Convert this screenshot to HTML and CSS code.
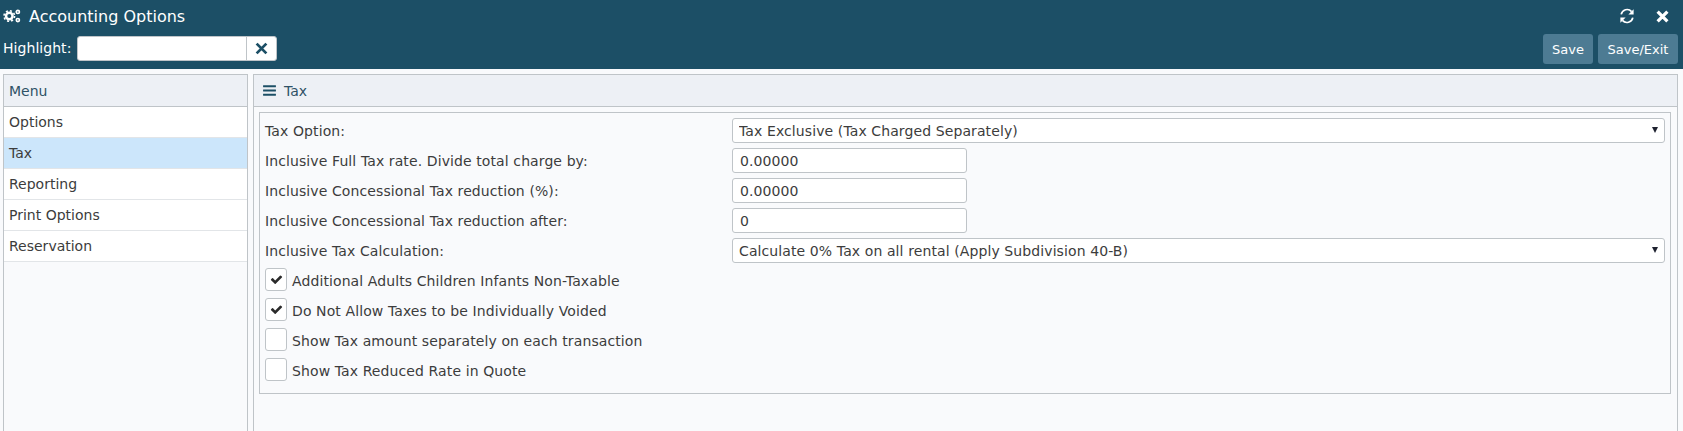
FILE: index.html
```html
<!DOCTYPE html>
<html lang="en">
<head>
    <meta charset="UTF-8">
    <meta name="viewport" content="width=device-width, initial-scale=1.0">
    <title>Accounting Options</title>
    <link rel="stylesheet" href="styles.css">
</head>
<body>
    <header class="topbar">
        <div class="title-row">
            <svg class="cogs" viewBox="0 0 16 12">
                <circle class="gear-teeth" cx="5.6" cy="6" r="4.7"/>
                <circle class="gear-big" cx="5.6" cy="6" r="2.9"/>
                <circle class="gear-small" cx="13.2" cy="2.4" r="1.4"/>
                <circle class="gear-small" cx="13.2" cy="9.6" r="1.4"/>
            </svg>
            <span class="title">Accounting Options</span>
            <div class="window-icons">
                <svg class="refresh" viewBox="0 0 16 16">
                    <path class="arc" d="M2.2 6.4A6 6 0 0 1 12.6 3.6"/>
                    <path class="arc" d="M13.8 9.6A6 6 0 0 1 3.4 12.4"/>
                    <path d="M14.6 1.2V6.4H9.4Z"/>
                    <path d="M1.4 14.8V9.6H6.6Z"/>
                </svg>
                <svg class="close" viewBox="0 0 12 12"><path d="M1.5 1.5L10.5 10.5M10.5 1.5L1.5 10.5"/></svg>
            </div>
        </div>
        <div class="tool-row">
            <label class="highlight-label" for="highlight">Highlight:</label>
            <input class="highlight-input" id="highlight" type="text">
            <button class="clear-btn" type="button">
                <svg viewBox="0 0 12 12"><path d="M1.5 1.5L10.5 10.5M10.5 1.5L1.5 10.5"/></svg>
            </button>
            <div class="actions">
                <button class="action-btn save-btn" type="button">Save</button>
                <button class="action-btn exit-btn" type="button">Save/Exit</button>
            </div>
        </div>
    </header>

    <main class="content">
        <aside class="panel menu">
            <div class="panel-head">Menu</div>
            <ul class="menu-list">
                <li>Options</li>
                <li class="active">Tax</li>
                <li>Reporting</li>
                <li>Print Options</li>
                <li>Reservation</li>
            </ul>
        </aside>

        <section class="panel detail">
            <div class="panel-head">
                <svg class="bars" viewBox="0 0 1792 1792"><path d="M1664 1344v128q0 26-19 45t-45 19h-1408q-26 0-45-19t-19-45v-128q0-26 19-45t45-19h1408q26 0 45 19t19 45zm0-512v128q0 26-19 45t-45 19h-1408q-26 0-45-19t-19-45v-128q0-26 19-45t45-19h1408q26 0 45 19t19 45zm0-512v128q0 26-19 45t-45 19h-1408q-26 0-45-19t-19-45v-128q0-26 19-45t45-19h1408q26 0 45 19t19 45z"/></svg>
                Tax
            </div>
            <form class="tax-form">
                <div class="row">
                    <label>Tax Option:</label>
                    <div class="select-wrap">
                        <select><option>Tax Exclusive (Tax Charged Separately)</option></select>
                    </div>
                </div>
                <div class="row">
                    <label>Inclusive Full Tax rate. Divide total charge by:</label>
                    <input class="num" type="text" value="0.00000">
                </div>
                <div class="row">
                    <label>Inclusive Concessional Tax reduction (%):</label>
                    <input class="num" type="text" value="0.00000">
                </div>
                <div class="row">
                    <label>Inclusive Concessional Tax reduction after:</label>
                    <input class="num" type="text" value="0">
                </div>
                <div class="row">
                    <label>Inclusive Tax Calculation:</label>
                    <div class="select-wrap">
                        <select><option>Calculate 0% Tax on all rental (Apply Subdivision 40-B)</option></select>
                    </div>
                </div>
                <div class="check-row">
                    <span class="check"><svg viewBox="0 0 1792 1792"><path d="M1671 566q0 40-28 68l-724 724-136 136q-28 28-68 28t-68-28l-136-136-362-362q-28-28-28-68t28-68l136-136q28-28 68-28t68 28l294 295 656-657q28-28 68-28t68 28l136 136q28 28 28 68z"/></svg></span>
                    <span>Additional Adults Children Infants Non-Taxable</span>
                </div>
                <div class="check-row">
                    <span class="check"><svg viewBox="0 0 1792 1792"><path d="M1671 566q0 40-28 68l-724 724-136 136q-28 28-68 28t-68-28l-136-136-362-362q-28-28-28-68t28-68l136-136q28-28 68-28t68 28l294 295 656-657q28-28 68-28t68 28l136 136q28 28 28 68z"/></svg></span>
                    <span>Do Not Allow Taxes to be Individually Voided</span>
                </div>
                <div class="check-row">
                    <span class="check"></span>
                    <span>Show Tax amount separately on each transaction</span>
                </div>
                <div class="check-row">
                    <span class="check"></span>
                    <span>Show Tax Reduced Rate in Quote</span>
                </div>
            </form>
        </section>
    </main>
</body>
</html>
```

FILE: styles.css
```css
* {
    box-sizing: border-box;
}
html, body {
    height: 100%;
}
body {
    margin: 0;
    overflow: hidden;
    display: flex;
    flex-direction: column;
    background-color: #f9fafc;
    color: #3c3c3c;
    font-family: "DejaVu Sans", Verdana, sans-serif;
    font-size: 14px;
}

/* top bar */
.topbar {
    height: 69px;
    flex: none;
    background-color: #1c4f66;
    color: #fff;
}
.title-row {
    height: 34px;
    padding: 0 14px 2px 3px;
    display: flex;
    align-items: center;
}
.cogs {
    width: 18px;
    height: 14px;
    margin-right: 8px;
    fill: none;
    stroke: #fff;
}
.gear-teeth {
    stroke-width: 1.4;
    stroke-dasharray: 1.85 1.84;
}
.gear-big {
    stroke-width: 2.2;
}
.gear-small {
    stroke-width: 1.5;
}
.title {
    font-size: 16px;
}
.window-icons {
    margin-left: auto;
    display: flex;
    align-items: center;
}
.refresh {
    width: 16px;
    height: 16px;
    margin-right: 21px;
    fill: #fff;
}
.refresh .arc {
    fill: none;
    stroke: #fff;
    stroke-width: 1.7;
}
.close {
    width: 13px;
    height: 13px;
    fill: none;
    stroke: #fff;
    stroke-width: 3;
}
.tool-row {
    display: flex;
    align-items: flex-start;
    padding: 0 5px 0 3px;
}
.highlight-label {
    margin-top: 2px;
    width: 74px;
    line-height: 25px;
    letter-spacing: 0.05px;
}
.highlight-input {
    width: 170px;
    height: 25px;
    margin-top: 2px;
    border: 1px solid #bfc4c8;
    border-radius: 3px 0 0 3px;
    background: #fff;
    padding: 0 6px;
}
.clear-btn {
    width: 31px;
    height: 25px;
    margin-top: 2px;
    margin-left: -1px;
    padding: 0;
    border: 1px solid #bfc4c8;
    border-radius: 0 3px 3px 0;
    background: #fff;
    display: flex;
    align-items: center;
    justify-content: center;
}
.clear-btn svg {
    width: 13px;
    height: 13px;
    fill: none;
    stroke: #1c4f66;
    stroke-width: 2.6;
}
.actions {
    margin-left: auto;
    display: flex;
    gap: 5px;
}
.action-btn {
    height: 30px;
    padding: 0;
    border: none;
    border-radius: 3px;
    background-color: #4d7b93;
    color: #fff;
    font-family: inherit;
    font-size: 13px;
}
.save-btn {
    width: 50px;
}
.exit-btn {
    width: 80px;
}

/* panels */
.content {
    flex: 1;
    min-height: 0;
    display: flex;
    gap: 5px;
    padding: 5px 5px 0 3px;
}
.panel {
    border: 1px solid #bfc4c8;
    border-bottom: none;
    background-color: #f9fafc;
}
.menu {
    width: 245px;
    flex: none;
}
.detail {
    flex: 1;
}
.panel-head {
    height: 32px;
    padding-left: 5px;
    display: flex;
    align-items: center;
    background-color: #edf0f5;
    border-bottom: 1px solid #bfc4c8;
    color: #2f5266;
}
.detail .panel-head {
    padding-left: 8px;
}
.bars {
    width: 15px;
    height: 15px;
    margin-right: 7px;
    fill: #1c4f66;
}
.menu-list {
    list-style: none;
    margin: 0;
    padding: 0;
}
.menu-list li {
    height: 31px;
    line-height: 30px;
    padding-left: 5px;
    background-color: #fff;
    border-bottom: 1px solid #e2e5e8;
}
.menu-list li.active {
    background-color: #cce6fb;
}

/* form */
.tax-form {
    margin: 5px 6px 0 5px;
    padding: 5px 5px 5px;
    border: 1px solid #bfc4c8;
    letter-spacing: 0.1px;
}
.row {
    height: 30px;
    display: grid;
    grid-template-columns: 467px 1fr;
}
.row label {
    line-height: 26px;
}
.num {
    width: 235px;
    height: 25px;
    padding: 0 7px;
    border: 1px solid #bfc4c8;
    border-radius: 3px;
    background: #fff;
    color: #3c3c3c;
    font-family: inherit;
    font-size: 14px;
    letter-spacing: 0.1px;
}
.select-wrap {
    position: relative;
    height: 25px;
}
.select-wrap::after {
    content: "";
    position: absolute;
    right: 7px;
    top: 9px;
    border-left: 3px solid transparent;
    border-right: 3px solid transparent;
    border-top: 6px solid #1e2230;
}
.select-wrap select {
    width: 100%;
    height: 25px;
    padding: 0 6px;
    appearance: none;
    border: 1px solid #bfc4c8;
    border-radius: 3px;
    background: #fff;
    color: #3c3c3c;
    font-family: inherit;
    font-size: 14px;
    letter-spacing: 0.1px;
}
.check-row {
    height: 30px;
    display: flex;
    align-items: flex-start;
    gap: 5px;
    line-height: 26px;
}
.check {
    width: 22px;
    height: 23px;
    flex: none;
    display: flex;
    align-items: center;
    justify-content: center;
    border: 1px solid #bfc4c8;
    border-radius: 3px;
    background: #fff;
}
.check svg {
    width: 13px;
    height: 13px;
    fill: #2a2a2a;
}
```
